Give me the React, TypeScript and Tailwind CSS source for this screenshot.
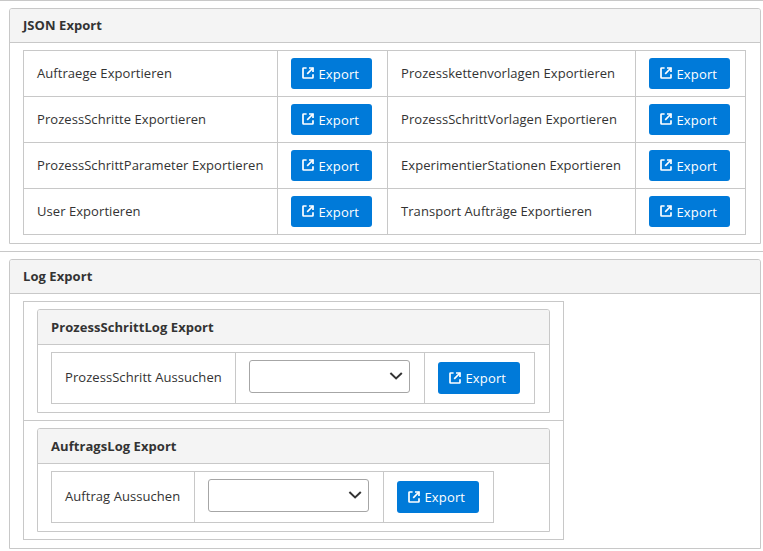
import React from "react";

const line = "border-[#c8c8c8]";

function ExternalLinkIcon() {
  return (
    <svg className="h-3 w-3 shrink-0" viewBox="0 0 12 12" fill="none" stroke="currentColor" strokeWidth="1.7">
      <path d="M4.6 1H1.6Q1 1 1 1.6V10.4Q1 11 1.6 11H10.4Q11 11 11 10.4V7.2" />
      <path d="M7 1H11V5" />
      <path d="M11 1L5.2 6.8" />
    </svg>
  );
}

function ExportButton({ large = false }: { large?: boolean }) {
  return (
    <button
      className={`flex items-start rounded-[3px] bg-[#007ad9] pl-[11px] pt-[7px] tracking-[0.15px] text-white ${
        large ? "h-8 w-[82px]" : "h-[31px] w-[81px]"
      }`}
    >
      <span className={large ? "mt-[3px]" : "mt-[2px]"}>
        <ExternalLinkIcon />
      </span>
      <span className="ml-[4.5px]">Export</span>
    </button>
  );
}

function Panel({
  title,
  headerClass,
  className,
  children,
}: {
  title: string;
  headerClass: string;
  className: string;
  children: React.ReactNode;
}) {
  return (
    <section className={`rounded-t-[3px] border bg-white ${line} ${className}`}>
      <h2 className={`rounded-t-[2px] border-b bg-[#f4f4f4] pl-[13px] font-bold ${line} ${headerClass}`}>{title}</h2>
      <div className="pl-[13px] pt-[7px]">{children}</div>
    </section>
  );
}

const exportRows = [
  ["Auftraege Exportieren", "Prozesskettenvorlagen Exportieren"],
  ["ProzessSchritte Exportieren", "ProzessSchrittVorlagen Exportieren"],
  ["ProzessSchrittParameter Exportieren", "ExperimentierStationen Exportieren"],
  ["User Exportieren", "Transport Aufträge Exportieren"],
];

function ExportRow({ labels }: { labels: string[] }) {
  return (
    <div className={`grid h-[46px] grid-cols-[254px_110px_248px_110px] border-b ${line}`}>
      {labels.map((label) => (
        <React.Fragment key={label}>
          <div className={`whitespace-nowrap border-r pl-[13px] pt-[13px] ${line}`}>{label}</div>
          <div className={`border-r pl-[13px] pt-[7px] ${line}`}>
            <ExportButton />
          </div>
        </React.Fragment>
      ))}
    </div>
  );
}

function LogPanel({ title, label, columns }: { title: string; label: string; columns: string }) {
  return (
    <div className={`h-[119px] border-b pl-[13px] pt-[7px] ${line}`}>
      <Panel title={title} headerClass="h-[35px] pt-2" className="h-[104px] w-[513px]">
        <div className={`inline-grid h-[52px] border-y border-l align-top ${columns} ${line}`}>
          <div className={`whitespace-nowrap border-r pl-[13px] pt-[15px] ${line}`}>{label}</div>
          <div className={`border-r pl-[13px] pt-[7px] ${line}`}>
            <button
              aria-label={label}
              className="flex h-[33px] w-[161px] items-start justify-end rounded-[3px] border border-[#a6a6a6] bg-white pr-[6px] pt-2"
            >
              <svg className="h-[14px] w-[14px]" viewBox="0 0 14 14" fill="none" stroke="#333333" strokeWidth="2">
                <path d="M1.4 4L7.1 9.4L12.8 4" />
              </svg>
            </button>
          </div>
          <div className={`border-r pl-[13px] pt-[9px] ${line}`}>
            <ExportButton large />
          </div>
        </div>
      </Panel>
    </div>
  );
}

export default function App() {
  return (
    <main className="h-[551px] w-[763px] overflow-hidden bg-white font-['Open_Sans',sans-serif] text-[13px] leading-[18px] tracking-[0.06px] text-[#333333]">
      <div className={`h-[252px] border-y pl-[9px] pt-[7px] ${line}`}>
        <Panel title="JSON Export" headerClass="h-[34px] pt-[7px]" className="h-[236px] w-[752px]">
          <div className={`w-[723px] border-l border-t ${line}`}>
            {exportRows.map((labels) => (
              <ExportRow key={labels[0]} labels={labels} />
            ))}
          </div>
        </Panel>
      </div>
      <div className="pl-[9px] pt-[7px]">
        <Panel title="Log Export" headerClass="h-[34px] pt-[7px]" className="h-[290px] w-[752px]">
          <div className={`w-[541px] border-x border-t ${line}`}>
            <LogPanel title="ProzessSchrittLog Export" label="ProzessSchritt Aussuchen" columns="grid-cols-[184px_189px_110px]" />
            <LogPanel title="AuftragsLog Export" label="Auftrag Aussuchen" columns="grid-cols-[143px_189px_110px]" />
          </div>
        </Panel>
      </div>
    </main>
  );
}
